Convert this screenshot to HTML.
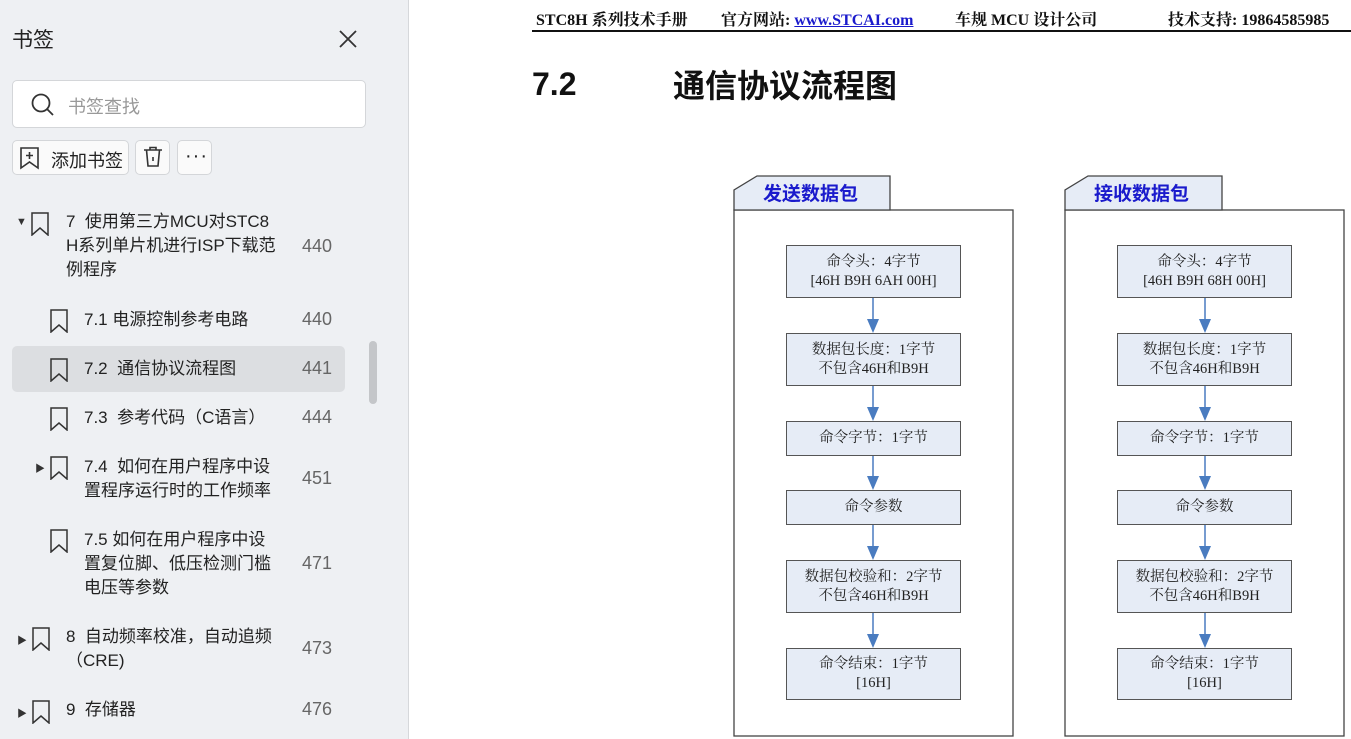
<!DOCTYPE html><html><head><meta charset="utf-8"><style>
*{margin:0;padding:0;box-sizing:border-box}
body{width:1351px;height:739px;overflow:hidden;background:#fff;position:relative;font-family:"Liberation Sans","Noto Sans CJK SC",sans-serif}
.a{position:absolute}
#sb{left:0;top:0;width:409px;height:739px;background:#eef0f3;border-right:1px solid #d6d8db}
.t{font-size:17px;color:#222;line-height:24px}
.n{font-size:18px;color:#666}
.bm{width:18px;height:24px}
.btn{background:#fafafa;border:1px solid #d4d6d9;border-radius:5px}
.box{position:absolute;background:#e6ecf6;border:1.5px solid #555;font-family:"Liberation Serif","Noto Serif CJK SC",serif;font-size:14.5px;color:#222;text-align:center;display:flex;flex-direction:column;justify-content:center;line-height:19px}
.hd{font-family:"Liberation Serif","Noto Serif CJK SC",serif;font-weight:bold;font-size:16px;color:#111;top:7px}
</style></head><body>
<div id="sb" class="a">
<div class="a" style="left:12px;top:24px;font-size:21px;color:#222">书签</div>
<svg class="a" style="left:338px;top:29px" width="20" height="20"><path d="M2 2L18 18M18 2L2 18" stroke="#333" stroke-width="1.8"/></svg>
<div class="a btn" style="left:12px;top:80px;width:354px;height:48px;background:#fff"></div>
<svg class="a" style="left:30px;top:92px" width="26" height="26"><circle cx="11" cy="11" r="8.5" fill="none" stroke="#333" stroke-width="1.8"/><path d="M17 17L23 23" stroke="#333" stroke-width="1.8"/></svg>
<div class="a" style="left:68px;top:93px;font-size:18px;color:#999">书签查找</div>
<div class="a btn" style="left:12px;top:140px;width:117px;height:35px"></div>
<svg class="a" style="left:19px;top:146px" width="22" height="24"><path d="M2 2H19V22L10.5 16L2 22Z" fill="none" stroke="#333" stroke-width="1.6"/><path d="M10.5 6V13M7 9.5H14" stroke="#333" stroke-width="1.6"/></svg>
<div class="a" style="left:51px;top:147px;font-size:18px;color:#222">添加书签</div>
<div class="a btn" style="left:135px;top:140px;width:35px;height:35px"></div>
<svg class="a" style="left:142px;top:146px" width="22" height="22"><path d="M2 4H20M8 4V1.5H14V4M4.5 4L6 20H16L17.5 4M11 11V15" fill="none" stroke="#333" stroke-width="1.6"/></svg>
<div class="a btn" style="left:177px;top:140px;width:35px;height:35px"></div>
<div class="a" style="left:185px;top:145px;font-size:20px;color:#222;letter-spacing:1px">···</div>

<div class="a" style="left:16px;top:216px;font-size:11px;color:#333">▼</div>
<svg class="a bm" style="left:31px;top:212px" viewBox="0 0 18 24"><path d="M1 1H17V23L9 16L1 23Z" fill="none" stroke="#333" stroke-width="1.5"/></svg>
<div class="a t" style="left:66px;top:210px;width:230px">7&nbsp; 使用第三方MCU对STC8<br>H系列单片机进行ISP下载范<br>例程序</div>
<div class="a n" style="left:302px;top:236px">440</div>

<svg class="a bm" style="left:50px;top:309px" viewBox="0 0 18 24"><path d="M1 1H17V23L9 16L1 23Z" fill="none" stroke="#333" stroke-width="1.5"/></svg>
<div class="a t" style="left:84px;top:308px">7.1 电源控制参考电路</div>
<div class="a n" style="left:302px;top:309px">440</div>

<div class="a" style="left:12px;top:346px;width:333px;height:46px;background:#dcdee1;border-radius:5px"></div>
<svg class="a bm" style="left:50px;top:358px" viewBox="0 0 18 24"><path d="M1 1H17V23L9 16L1 23Z" fill="none" stroke="#333" stroke-width="1.5"/></svg>
<div class="a t" style="left:84px;top:357px">7.2&nbsp; 通信协议流程图</div>
<div class="a n" style="left:302px;top:358px">441</div>
<div class="a" style="left:369px;top:341px;width:8px;height:63px;background:#c4c6c9;border-radius:4px"></div>

<svg class="a bm" style="left:50px;top:407px" viewBox="0 0 18 24"><path d="M1 1H17V23L9 16L1 23Z" fill="none" stroke="#333" stroke-width="1.5"/></svg>
<div class="a t" style="left:84px;top:406px">7.3&nbsp; 参考代码（C语言）</div>
<div class="a n" style="left:302px;top:407px">444</div>

<div class="a" style="left:35px;top:460px;font-size:10px;color:#333">▶</div>
<svg class="a bm" style="left:50px;top:456px" viewBox="0 0 18 24"><path d="M1 1H17V23L9 16L1 23Z" fill="none" stroke="#333" stroke-width="1.5"/></svg>
<div class="a t" style="left:84px;top:455px">7.4&nbsp; 如何在用户程序中设<br>置程序运行时的工作频率</div>
<div class="a n" style="left:302px;top:468px">451</div>

<svg class="a bm" style="left:50px;top:529px" viewBox="0 0 18 24"><path d="M1 1H17V23L9 16L1 23Z" fill="none" stroke="#333" stroke-width="1.5"/></svg>
<div class="a t" style="left:84px;top:528px">7.5 如何在用户程序中设<br>置复位脚、低压检测门槛<br>电压等参数</div>
<div class="a n" style="left:302px;top:553px">471</div>

<div class="a" style="left:17px;top:632px;font-size:10px;color:#333">▶</div>
<svg class="a bm" style="left:32px;top:627px" viewBox="0 0 18 24"><path d="M1 1H17V23L9 16L1 23Z" fill="none" stroke="#333" stroke-width="1.5"/></svg>
<div class="a t" style="left:66px;top:625px">8&nbsp; 自动频率校准，自动追频<br>（CRE)</div>
<div class="a n" style="left:302px;top:638px">473</div>

<div class="a" style="left:17px;top:705px;font-size:10px;color:#333">▶</div>
<svg class="a bm" style="left:32px;top:700px" viewBox="0 0 18 24"><path d="M1 1H17V23L9 16L1 23Z" fill="none" stroke="#333" stroke-width="1.5"/></svg>
<div class="a t" style="left:66px;top:698px">9&nbsp; 存储器</div>
<div class="a n" style="left:302px;top:699px">476</div>
</div>

<div class="a hd" style="left:536px">STC8H 系列技术手册</div>
<div class="a hd" style="left:721px">官方网站: <span style="color:#1a1acc;text-decoration:underline">www.STCAI.com</span></div>
<div class="a hd" style="left:955px">车规 MCU 设计公司</div>
<div class="a hd" style="left:1168px">技术支持: 19864585985</div>
<div class="a" style="left:532px;top:30px;width:819px;height:2px;background:#111"></div>
<div class="a" style="left:532px;top:66px;font-size:32px;font-weight:bold;color:#111">7.2</div>
<div class="a" style="left:673px;top:62px;font-size:32px;font-weight:bold;color:#111;font-family:'Noto Sans CJK SC',sans-serif;line-height:44px">通信协议流程图</div>

<svg class="a" style="left:0;top:0" width="1351" height="739">
<g fill="#e6ecf6" stroke="#444" stroke-width="1.3">
<rect x="734" y="210" width="279" height="526" fill="#fff"/>
<path d="M734 210V190L757 176H890V210Z"/>
<rect x="1065" y="210" width="279" height="526" fill="#fff"/>
<path d="M1065 210V190L1088 176H1222V210Z"/>
</g>
<g stroke="#4a7cc0" stroke-width="1.5" fill="#4a7cc0">
<path d="M873 298V320M873 386V408M873 456V477M873 525V547M873 613V635"/>
<path d="M1205 298V320M1205 386V408M1205 456V477M1205 525V547M1205 613V635"/>
</g>
<g fill="#4a7cc0">
<path d="M867 319H879L873 333Z M867 407H879L873 421Z M867 476H879L873 490Z M867 546H879L873 560Z M867 634H879L873 648Z"/>
<path d="M1199 319H1211L1205 333Z M1199 407H1211L1205 421Z M1199 476H1211L1205 490Z M1199 546H1211L1205 560Z M1199 634H1211L1205 648Z"/>
</g>
</svg>
<div class="a" style="left:763px;top:179px;font-size:19px;font-weight:bold;color:#1a1acc;font-family:'Noto Sans CJK SC',sans-serif">发送数据包</div>
<div class="a" style="left:1094px;top:179px;font-size:19px;font-weight:bold;color:#1a1acc;font-family:'Noto Sans CJK SC',sans-serif">接收数据包</div>

<div class="box" style="left:786px;top:245px;width:175px;height:53px">命令头：4字节<br>[46H B9H 6AH 00H]</div>
<div class="box" style="left:786px;top:333px;width:175px;height:53px">数据包长度：1字节<br>不包含46H和B9H</div>
<div class="box" style="left:786px;top:421px;width:175px;height:35px">命令字节：1字节</div>
<div class="box" style="left:786px;top:490px;width:175px;height:35px">命令参数</div>
<div class="box" style="left:786px;top:560px;width:175px;height:53px">数据包校验和：2字节<br>不包含46H和B9H</div>
<div class="box" style="left:786px;top:648px;width:175px;height:52px">命令结束：1字节<br>[16H]</div>

<div class="box" style="left:1117px;top:245px;width:175px;height:53px">命令头：4字节<br>[46H B9H 68H 00H]</div>
<div class="box" style="left:1117px;top:333px;width:175px;height:53px">数据包长度：1字节<br>不包含46H和B9H</div>
<div class="box" style="left:1117px;top:421px;width:175px;height:35px">命令字节：1字节</div>
<div class="box" style="left:1117px;top:490px;width:175px;height:35px">命令参数</div>
<div class="box" style="left:1117px;top:560px;width:175px;height:53px">数据包校验和：2字节<br>不包含46H和B9H</div>
<div class="box" style="left:1117px;top:648px;width:175px;height:52px">命令结束：1字节<br>[16H]</div>
</body></html>
